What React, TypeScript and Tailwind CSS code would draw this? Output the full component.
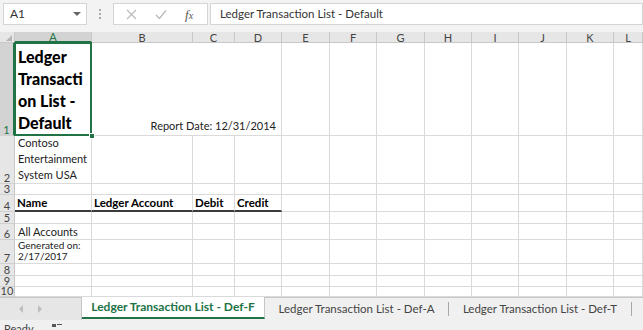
import React from "react";

const colW = [15, 77, 101, 42, 47, 48, 47, 48, 47, 47, 48, 47, 29];
const colL = ["", "A", "B", "C", "D", "E", "F", "G", "H", "I", "J", "K", "L"];
const rowH = [93, 48, 11, 17, 12, 16, 24, 12, 11, 10];

const font = { fontFamily: "Lato, 'Open Sans', sans-serif" };

function cellContent(r: number, c: number): React.ReactNode {
  if (r === 1 && c === 1)
    return (
      <div className="text-[11px] leading-[16px] pl-[3px]">
        Contoso
        <br />
        Entertainment
        <br />
        System USA
      </div>
    );
  if (r === 3) {
    const t = ["", "Name", "Ledger Account", "Debit", "Credit"][c];
    if (t)
      return <div className="pl-[2px] text-[11.5px] font-bold leading-[15px] text-black whitespace-nowrap">{t}</div>;
  }
  if (r === 5 && c === 1)
    return <div className="pl-[3px] text-[11px] leading-[14px] whitespace-nowrap">All Accounts</div>;
  if (r === 6 && c === 1)
    return (
      <div className="pl-[3px] pb-[1px] text-[10px] leading-[11px] whitespace-nowrap">
        Generated on:
        <br />
        2/17/2017
      </div>
    );
  return null;
}

export default function App() {
  const gridCols = colW.map((w) => `${w}px`).join(" ");
  const cells: React.ReactNode[] = [];
  rowH.forEach((_, r) => {
    colL.forEach((__, c) => {
      if (c === 0) {
        cells.push(
          <div
            key={`r${r}c0`}
            className={`flex items-end justify-center overflow-visible text-[11px] leading-[9px] border-r border-b border-b-[#d0d0d0] ${
              r === 0 ? "bg-[#d3d3d3] text-[#217346] border-r-2 border-r-[#217346]" : "bg-[#e6e6e6] text-[#444] border-r-[#c8c8c8]"
            }`}
          >
            <span className="pb-[1px]">{r + 1}</span>
          </div>
        );
        return;
      }
      if (r === 0 && c === 1) {
        cells.push(
          <div key="a1" className="relative flex items-end border-r border-b border-[#dadada] pl-[3px]">
            <div className="text-[16px] font-black leading-[22px] text-black pb-[1px]">
              Ledger
              <br />
              Transacti
              <br />
              on List -
              <br />
              Default
            </div>
            <div className="absolute inset-[-1px] border-2 border-[#217346] pointer-events-none" />
            <div className="absolute right-[-4px] bottom-[-4px] w-[6px] h-[6px] bg-[#217346] border border-white z-10" />
          </div>
        );
        return;
      }
      if (r === 0 && (c === 3 || c === 4)) return;
      if (r === 0 && c === 2) {
        cells.push(
          <div key="rd" className="col-span-3 flex items-end justify-end pr-[5px] pb-[2px] border-r border-b border-[#dadada]">
            <span className="text-[11px] leading-[14px] whitespace-nowrap text-[#222]">Report Date: 12/31/2014</span>
          </div>
        );
        return;
      }
      const thick = r === 3 && c >= 1 && c <= 4;
      cells.push(
        <div
          key={`r${r}c${c}`}
          className={`flex items-end border-r border-[#dadada] ${thick ? "border-b-2 border-b-[#3a3a3a]" : "border-b border-b-[#dadada]"}`}
        >
          {cellContent(r, c)}
        </div>
      );
    });
  });

  return (
    <div className="w-[643px] h-[330px] overflow-hidden bg-white text-[#222] flex flex-col" style={font}>
      {/* formula bar */}
      <div className="h-[32px] shrink-0 bg-[#f3f3f3] flex items-start pt-[3px] pl-[3px]">
        <div className="w-[84px] h-[22px] bg-white border border-[#d5d5d5] flex items-center justify-between pl-[6px] pr-[5px] text-[12px] text-[#333]">
          A1
          <span className="w-0 h-0 border-l-[4px] border-r-[4px] border-t-[4px] border-l-transparent border-r-transparent border-t-[#666]" />
        </div>
        <div className="w-[26px] h-[22px] flex flex-col items-center justify-center gap-[2px]">
          <span className="w-[2px] h-[2px] bg-[#aaa]" />
          <span className="w-[2px] h-[2px] bg-[#aaa]" />
          <span className="w-[2px] h-[2px] bg-[#aaa]" />
        </div>
        <div className="w-[95px] h-[22px] bg-white border border-[#d5d5d5] flex items-center pl-[12px] gap-[18px]">
          <svg width="11" height="11" viewBox="0 0 11 11">
            <path d="M1 1 L10 10 M10 1 L1 10" stroke="#bbb" strokeWidth="1.2" />
          </svg>
          <svg width="12" height="11" viewBox="0 0 12 11">
            <path d="M1 6 L4.5 9.5 L11 1.5" stroke="#bbb" strokeWidth="1.3" fill="none" />
          </svg>
          <span className="text-[13px] italic text-[#555] leading-none" style={{ fontFamily: "'Liberation Serif', serif" }}>
            f<span className="text-[10px]">x</span>
          </span>
        </div>
        <div className="ml-[2px] flex-1 h-[22px] bg-white border border-[#d5d5d5] flex items-center pl-[9px] text-[11.5px] text-[#333]">
          Ledger Transaction List - Default
        </div>
      </div>

      {/* sheet */}
      <div
        className="grid shrink-0"
        style={{ gridTemplateColumns: gridCols, gridTemplateRows: `11px ${rowH.map((h) => h + "px").join(" ")}` }}
      >
        {colL.map((l, i) => (
          <div
            key={"h" + i}
            className={`flex items-center justify-center text-[11px] leading-none border-r border-[#c8c8c8] ${
              i === 1
                ? "bg-[#d3d3d3] text-[#217346] border-b-2 border-b-[#217346]"
                : i === 0
                ? "bg-[#e6e6e6] border-b border-b-[#c8c8c8] justify-end items-end pr-[2px] pb-[1px]"
                : "bg-[#e6e6e6] text-[#444] border-b border-b-[#c8c8c8]"
            }`}
          >
            {i === 0 ? (
              <span className="w-0 h-0 border-l-[6px] border-b-[6px] border-l-transparent border-b-[#b4b4b4]" />
            ) : (
              l
            )}
          </div>
        ))}
        {cells}
      </div>

      {/* tabs */}
      <div className="h-[23px] shrink-0 bg-[#f0f0f0] border-t border-[#c6c6c6] flex text-[11.5px]">
        <div className="w-[82px] h-full bg-[#e6e6e6] border-r border-[#c6c6c6] flex items-center pl-[19px] gap-[15px]">
          <span className="w-0 h-0 border-t-[4px] border-b-[4px] border-r-[4px] border-t-transparent border-b-transparent border-r-[#bdbdbd]" />
          <span className="w-0 h-0 border-t-[4px] border-b-[4px] border-l-[4px] border-t-transparent border-b-transparent border-l-[#bdbdbd]" />
        </div>
        <div className="w-[183px] h-full bg-white -mt-px flex items-center justify-center font-bold text-[12px] text-[#217346] border-b-2 border-[#217346] border-r border-r-[#c6c6c6]">
          Ledger Transaction List - Def-F
        </div>
        <div className="w-[184px] h-full flex items-center">
          <span className="flex-1 text-center text-[#444]">Ledger Transaction List - Def-A</span>
          <span className="h-[14px] w-px bg-[#a8a8a8]" />
        </div>
        <div className="w-[183px] h-full flex items-center">
          <span className="flex-1 text-center text-[#444]">Ledger Transaction List - Def-T</span>
          <span className="h-[14px] w-px bg-[#a8a8a8]" />
        </div>
      </div>
      {/* status */}
      <div className="flex-1 bg-[#f0f0f0] flex items-start pt-[3px] pl-[4px] gap-[18px] overflow-hidden">
        <span className="text-[11px] text-[#444] leading-none">Ready</span>
        <span className="flex gap-[1px] pt-[1px]">
          <span className="w-[4px] h-[3px] bg-[#555]" />
          <span className="w-[5px] h-[1px] bg-[#555]" />
        </span>
      </div>
    </div>
  );
}
